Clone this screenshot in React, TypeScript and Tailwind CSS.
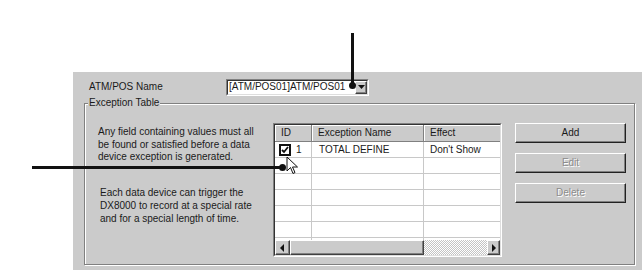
import type { ReactNode } from 'react';

const ROWS = [
  { id: '1', name: 'TOTAL DEFINE', effect: "Don't Show", checked: true },
  { id: '', name: '', effect: '' },
  { id: '', name: '', effect: '' },
  { id: '', name: '', effect: '' },
  { id: '', name: '', effect: '' },
  { id: '', name: '', effect: '' },
  { id: '', name: '', effect: '' },
];

function Checkbox() {
  return (
    <svg width="12" height="12" viewBox="0 0 12 12" className="shrink-0">
      <rect x="1" y="1" width="10" height="10" fill="#fff" stroke="#111" strokeWidth="2" />
      <path d="M3 6l2 2 4-5" fill="none" stroke="#111" strokeWidth="1.8" />
    </svg>
  );
}

function Cursor() {
  return (
    <svg width="13" height="19" viewBox="0 0 13 19" className="absolute left-[286px] top-[156px]">
      <path d="M1 1v14l3.5-3.5 2.5 6 2-1-2.5-5.5h5z" fill="#fff" stroke="#111" strokeWidth="1" strokeLinejoin="round" />
    </svg>
  );
}

function ArrowButton({ dir }: { dir: 'left' | 'right' | 'down' }) {
  const d = dir === 'left' ? 'M6 1v8L2 5z' : dir === 'right' ? 'M3 1v8l4-4z' : 'M1 3h7L4.5 7z';
  return (
    <div className="flex h-full items-center justify-center border border-t-white border-l-white border-r-[#404040] border-b-[#404040] bg-[#cbcbcb] shadow-[inset_-1px_-1px_0_#808080]">
      <svg width="9" height="10" viewBox="0 0 9 10">
        <path d={d} fill="#111" />
      </svg>
    </div>
  );
}

function WinButton({ children, disabled }: { children: ReactNode; disabled?: boolean }) {
  return (
    <div
      className={`flex h-[20px] items-center justify-center border border-t-white border-l-white border-r-[#222] border-b-[#222] bg-[#cbcbcb] shadow-[inset_-1px_-1px_0_#808080] ${
        disabled ? 'text-[#8c8c8c] [text-shadow:1px_1px_0_#fff]' : 'text-[#1a1a1a]'
      }`}
    >
      {children}
    </div>
  );
}

function ExceptionTable() {
  return (
    <div className="h-[134px] w-[229px] border border-t-[#808080] border-l-[#808080] border-r-white border-b-white">
      <div className="flex h-full flex-col border border-t-[#333] border-l-[#333] border-r-[#dedede] border-b-[#dedede] bg-white">
        <div className="flex h-[17px] shrink-0 bg-[#cbcbcb]">
          <div className="flex w-[37px] items-center border-r border-b border-[#808080] pl-[6px] shadow-[inset_1px_1px_0_#fff]">ID</div>
          <div className="flex w-[112px] items-center border-r border-b border-[#808080] pl-[6px] shadow-[inset_1px_1px_0_#fff]">Exception Name</div>
          <div className="flex flex-1 items-center border-b border-[#808080] pl-[6px] shadow-[inset_1px_1px_0_#fff]">Effect</div>
        </div>
        <div className="flex-1 overflow-hidden">
          {ROWS.map((row, i) => (
            <div key={i} className="flex h-[16px] border-b border-[#c8c8c8]">
              <div className="flex w-[37px] items-center gap-[5px] border-r border-[#c8c8c8] pl-[4px]">
                {row.checked && <Checkbox />}
                {row.id}
              </div>
              <div className="flex w-[112px] items-center border-r border-[#c8c8c8] pl-[7px]">{row.name}</div>
              <div className="flex flex-1 items-center pl-[6px]">{row.effect}</div>
            </div>
          ))}
        </div>
        <div className="flex h-[15px] shrink-0">
          <div className="w-[15px]"><ArrowButton dir="left" /></div>
          <div className="w-[134px] border border-t-white border-l-white border-r-[#404040] border-b-[#404040] bg-[#cbcbcb] shadow-[inset_-1px_-1px_0_#808080]" />
          <div className="flex-1 bg-[repeating-conic-gradient(#c4c4c4_0_25%,#ffffff_0_50%)] bg-[length:2px_2px]" />
          <div className="w-[13px]"><ArrowButton dir="right" /></div>
        </div>
      </div>
    </div>
  );
}

export default function App() {
  return (
    <div className="relative h-[271px] w-[642px] overflow-hidden bg-white pt-[72px] pl-[73px] font-['Liberation_Sans',Arial,sans-serif] text-[10px] leading-none text-[#1a1a1a]">
      <div className="h-[198px] bg-[#cbcbcb] pt-[7px]">
        <div className="flex h-[16px] items-center pl-[16px]">
          <span className="w-[137px]">ATM/POS Name</span>
          <div className="h-[17px] w-[143px] border border-t-[#808080] border-l-[#808080] border-r-white border-b-white">
            <div className="flex h-full items-center border border-t-[#333] border-l-[#333] border-r-[#dedede] border-b-[#dedede] bg-white pl-[1px]">
              <span className="flex-1">[ATM/POS01]ATM/POS01</span>
              <div className="h-full w-[12px]"><ArrowButton dir="down" /></div>
            </div>
          </div>
        </div>

        <div className="relative mt-[8px] ml-[11px] h-[162px] w-[551px] border border-[#808080] shadow-[1px_1px_0_#fff,inset_1px_1px_0_#fff]">
          <span className="absolute left-[3px] top-[-6px] bg-[#cbcbcb] px-[1px]">Exception Table</span>
          <div className="flex pt-[19px] pl-[13px]">
            <div className="w-[175px] leading-[12.5px]">
              <p className="mt-[3px]">
                Any field containing values must all
                <br />
                be found or satisfied before a data
                <br />
                device exception is generated.
              </p>
              <p className="mt-[22px] pl-[2px] leading-[13px]">
                Each data device can trigger the
                <br />
                DX8000 to record at a special rate
                <br />
                and for a special length of time.
              </p>
            </div>
            <ExceptionTable />
            <div className="ml-[13px] flex w-[111px] flex-col gap-[10px]">
              <WinButton>Add</WinButton>
              <WinButton disabled>Edit</WinButton>
              <WinButton disabled>Delete</WinButton>
            </div>
          </div>
        </div>
      </div>

      {/* callout lines */}
      <div className="absolute left-[351px] top-[33px] h-[52px] w-[3px] bg-[#111]" />
      <div className="absolute left-[349px] top-[82px] h-[7px] w-[7px] rounded-full bg-[#111]" />
      <div className="absolute left-[32px] top-[166px] h-[3px] w-[250px] bg-[#111]" />
      <div className="absolute left-[279px] top-[164px] h-[7px] w-[7px] rounded-full bg-[#111]" />
      <Cursor />
    </div>
  );
}
